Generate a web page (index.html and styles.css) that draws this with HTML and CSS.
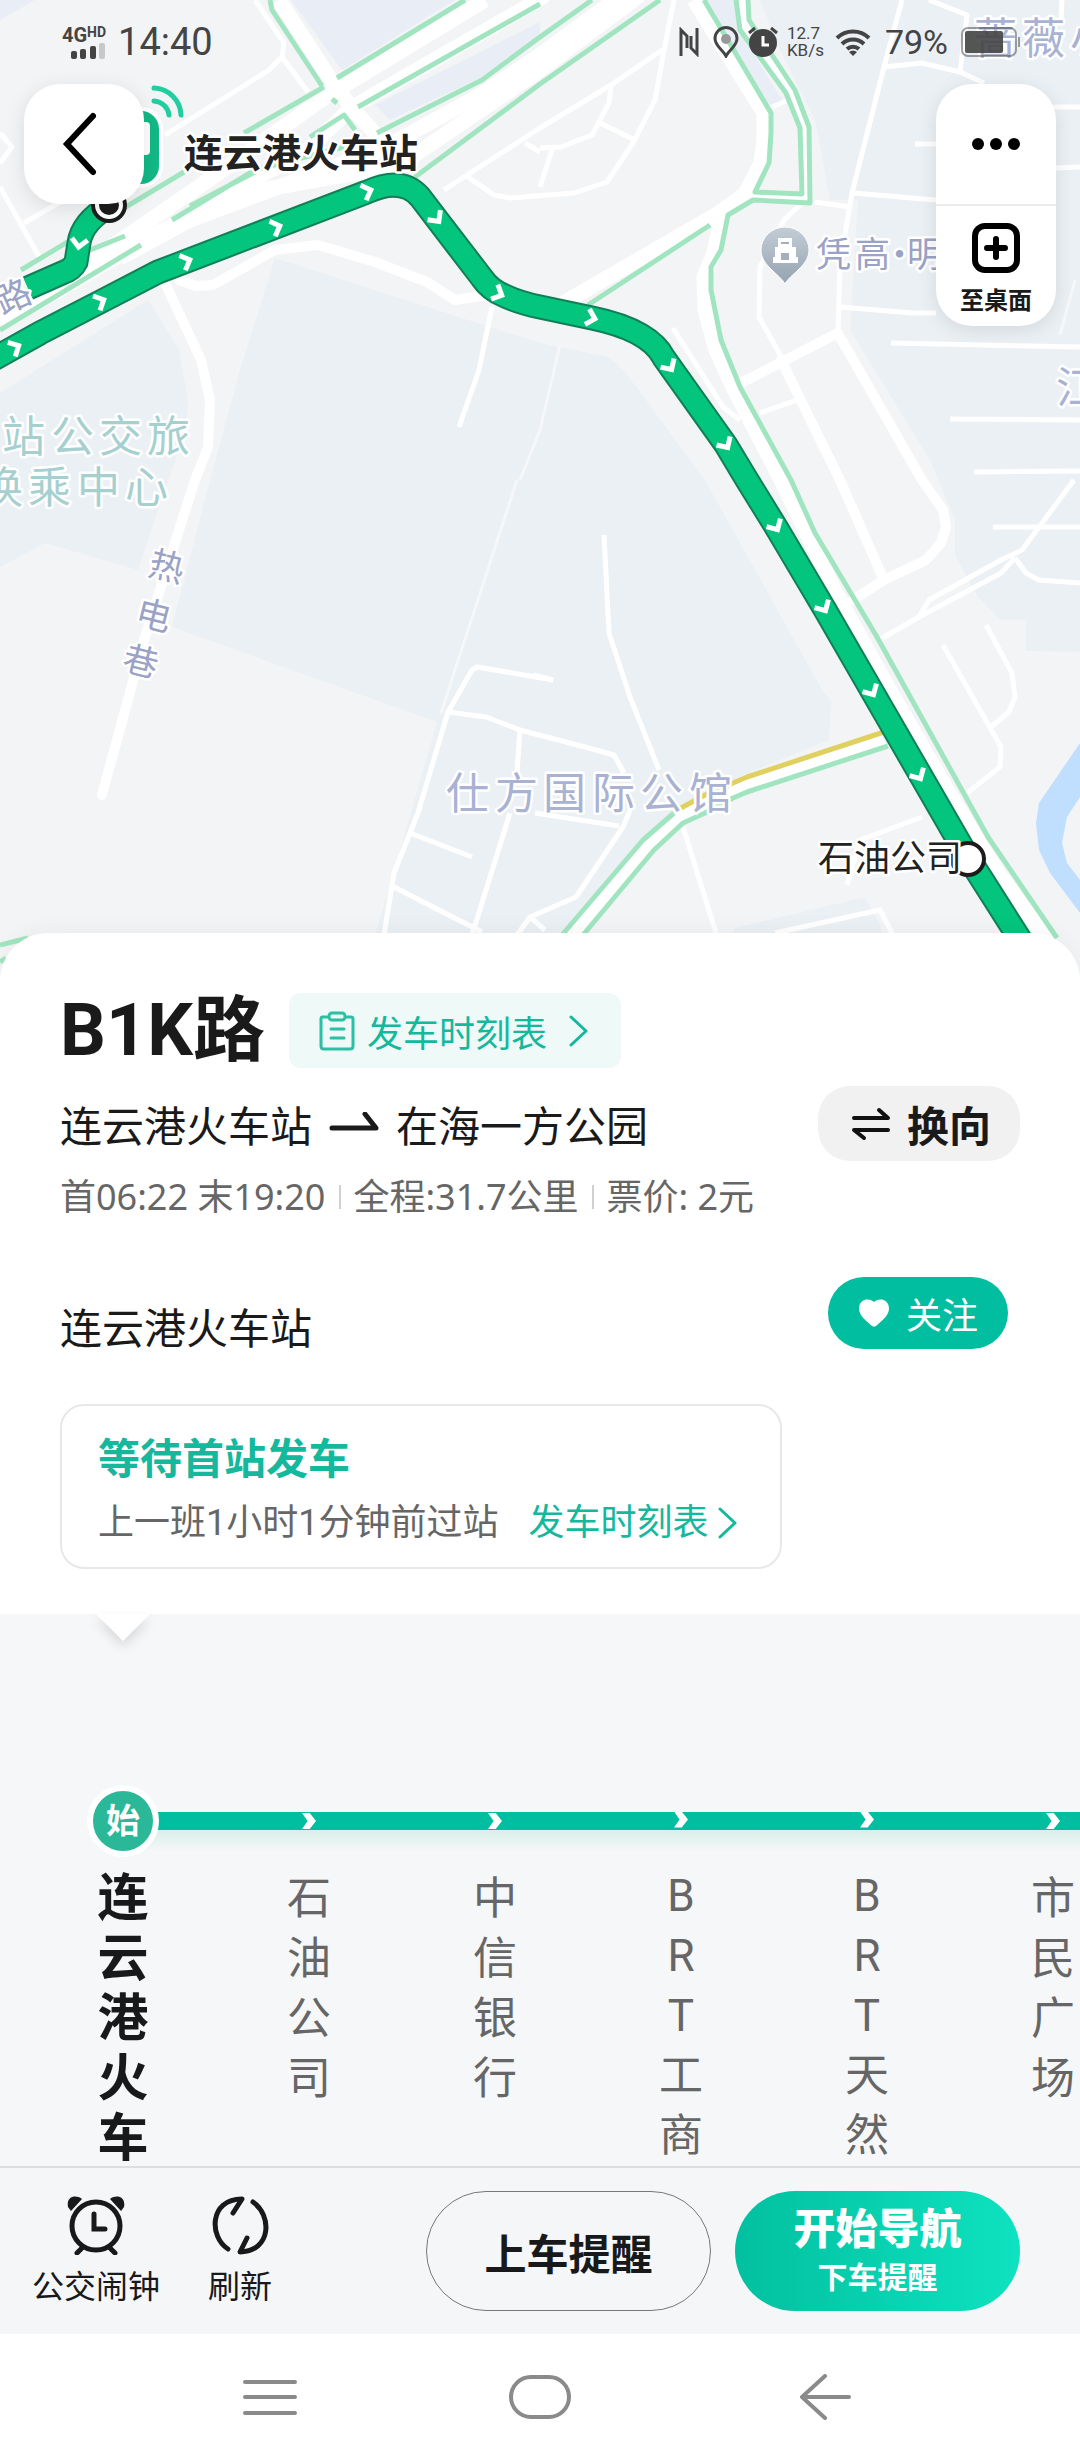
FILE: index.html
```html
<!DOCTYPE html>
<html lang="zh-CN">
<head>
  <meta charset="UTF-8">
  <meta name="viewport" content="width=device-width, initial-scale=1">
  <title>B1K路</title>
  <link rel="stylesheet" href="styles.css">
</head>
<body>
  <div class="page">
    <section class="map">
      <svg class="map-canvas" viewBox="0 0 1080 985" preserveAspectRatio="xMidYMin slice">
        <defs>
          <linearGradient id="poi" x1="0" y1="0" x2="0" y2="1">
            <stop offset="0" stop-color="#c3cdd6"/>
            <stop offset="1" stop-color="#94a3af"/>
          </linearGradient>
          <path id="arrow" d="M-5-8 3 0-5 8"/>
        </defs>

        <!-- 地块 -->
        <g class="block">
          <path d="M275 258 540 343 609 357 626 373 705 480 822 690 831 700 829 740 743 775 680 812 562 933 376 985 376 933 437 722 172 627 210 480 240 370Z"/>
          <path d="M0 393 148 300 179 350 188 400 186 430 158 510 138 570 45 543 0 567Z"/>
          <path d="M760 0H1080V652L1026 651 1026 620 1000 620 978 597 955 555 955 520 930 460 850 330 858 200 830 200 815 120 780 50Z"/>
          <path d="M735 928 865 897 880 925 890 985 720 985Z"/>
        </g>
        <g class="block block-top">
          <path d="M291 0H455L342 70Z"/>
          <path d="M375 105 540 22V36L480 78 390 120Z"/>
          <path d="M0 0H35L0 20Z"/>
          <path d="M700 0H736L745 40 785 105 772 108Z"/>
        </g>

        <path class="river" d="M1080 743 1039 803 1036 823 1039 850 1050 873 1080 913V880L1067 863 1062 843 1067 817 1080 797Z"/>

        <!-- 小路 -->
        <g class="road">
          <path d="M255 0 284 43 282 57 308 92M282 57 269 70 165 135M0 133 12 147 0 163M0 187 41 260M24 223 95 182"/>
          <path d="M492 307 479 370 459 427M540 128 611 85 662 50M540 128 444 190M674 0 664 50 655 100 633 143 607 182 574 193 510 198 494 195 468 177"/>
          <path d="M611 85 609 103 592 135 561 147 540 148M600 123 635 140M552 150 540 187M525 143 540 152"/>
          <path d="M902 0 884 67 852 193 840 263 838 333M884 67 922 63 960 72 984 83M929 0 967 15 960 72M1062 0 1061 20"/>
          <path d="M815 202 850 207M853 193 936 200M915 144H940M840 307 912 313H936M1056 168 1080 167M1053 107H1080"/>
          <path d="M891 343 1080 347M950 419 1080 420M974 472 1080 471M993 527H1080M770 108 786 101"/>
          <path d="M802 203 784 220 760 267 759 317 783 360M760 413 797 400M673 328 723 407 740 420"/>
          <path d="M1074 480 1022 550 1001 560 929 600 919 617 879 640M1015 558 1001 573 919 617M1015 558 1026 573 1039 580 1080 583"/>
          <path d="M986 625 1012 673 1015 697 1009 712 991 727M943 645 1001 747 1000 767 967 793M922 817 860 840 847 885"/>
          <path d="M604 535 609 633 630 697 659 770M683 827 716 933M533 675 553 680"/>
          <path d="M553 680 477 667 472 670 448 712 418 813 394 873 384 935M448 712 486 717 520 730 585 747 614 755 624 773"/>
          <path d="M520 730 517 773M510 813 472 935M410 833 472 857M394 887 482 932M517 935 530 917 576 897 623 827 630 810M530 917 545 930M535 813 619 826"/>
          <path d="M775 933 880 910 893 935"/>
        </g>
        <path class="road faint" d="M517 480 441 713M560 345 540 430 520 480M1075 280 1060 335"/>

        <!-- 主路 -->
        <g class="road mid">
          <path d="M165 283 201 360 210 400 208 447 195 480 145 637 102 795"/>
          <path d="M179 280 196 286 213 285 275 250 318 245 375 262 427 282 455 300 486 295"/>
          <path d="M838 333 743 382M840 337 922 480 943 510 946 527 941 543 926 560 884 580 853 600M781 360 840 480 884 580"/>
        </g>
        <g class="road wide">
          <path d="M279 0 331 80 351 107 390 150"/>
          <path d="M0 318 117 243 200 186 327 96 485 0"/>
          <path d="M0 324 150 238 310 148 351 108 530 5 545-5"/>
          <path d="M120 258 190 220 384 148 482 94 540 55 622-5"/>
          <path d="M250 192 400 165 540 70 640-5"/>
          <path d="M694 0 764 113V140L761 163 745 194 719 213 560 305"/>
          <path d="M722 215 714 253 704 277 705 310 716 350 733 387 781 480 836 593 884 680 953 800 998 873 1057 953 1080 990"/>
          <path d="M571 937 647 847 678 817 743 787 884 740"/>
        </g>
        <path class="road loop" d="M742 0 745 25 790 92 805 128V199L750 196"/>

        <!-- 路况 -->
        <g class="traffic">
          <path d="M270 0 272 10 322 86M337 78 465 0M358 107 540 4M377 133 482 80 540 37 592 0M415 177 540 84 660 0"/>
          <path d="M21 270 184 172M244 133 324 87M310 137 344 115 355 130M172 220 255 170 344 147M190 206 255 172M60 262 125 236M0 330 141 245M332 99 337 103"/>
          <path d="M704 0 771 113 771 133 769 163 755 192 802 194 800 128 786 93 740 30 736 0"/>
          <path d="M748 0 749 20 795 90 809 127 810 203 753 200 728 215 721 250 711 267 711 290 721 340 740 387 791 480 815 533 877 637 988 837 1057 938"/>
          <path d="M588 305 710 225M562 935 643 840 674 813M583 935 654 850 683 823 705 813 733 798 747 792 888 746M0 945 28 938M0 962 6 958"/>
        </g>
        <path class="traffic slow" d="M681 808 705 795 733 783 747 777 884 732"/>

        <!-- 公交线路 -->
        <g class="line line-edge">
          <path d="M-10 361 40 333 100 302 158 272 367 192Q402 176 420 197L436 218 482 278Q490 290 505 296 520 303 540 307L592 318Q650 330 664 358L726 445 747 480 776 527 824 608 969 859 1030 955"/>
          <path d="M109 206Q82 222 79 243L76 262Q72 270 62 273L28 288"/>
        </g>
        <g class="line">
          <path d="M-10 361 40 333 100 302 158 272 367 192Q402 176 420 197L436 218 482 278Q490 290 505 296 520 303 540 307L592 318Q650 330 664 358L726 445 747 480 776 527 824 608 969 859 1030 955"/>
          <path d="M109 206Q82 222 79 243L76 262Q72 270 62 273L28 288"/>
        </g>
        <g class="arrows">
          <use href="#arrow" transform="translate(16 347) rotate(-28)"/>
          <use href="#arrow" transform="translate(101 301) rotate(-26)"/>
          <use href="#arrow" transform="translate(187 261) rotate(-22)"/>
          <use href="#arrow" transform="translate(277 227) rotate(-21)"/>
          <use href="#arrow" transform="translate(368 191) rotate(-21)"/>
          <use href="#arrow" transform="translate(437 219) rotate(53)"/>
          <use href="#arrow" transform="translate(499 294) rotate(25)"/>
          <use href="#arrow" transform="translate(592 318) rotate(16)"/>
          <use href="#arrow" transform="translate(670 367) rotate(57)"/>
          <use href="#arrow" transform="translate(726 445) rotate(58)"/>
          <use href="#arrow" transform="translate(776 527) rotate(60)"/>
          <use href="#arrow" transform="translate(824 608) rotate(60)"/>
          <use href="#arrow" transform="translate(872 692) rotate(60)"/>
          <use href="#arrow" transform="translate(919 776) rotate(60)"/>
          <use href="#arrow" transform="translate(79 244) rotate(98)"/>
        </g>

        <!-- 站点 -->
        <circle cx="109" cy="205" r="16" fill="#fff" stroke="#1c1c1c" stroke-width="4"/>
        <circle cx="109" cy="205" r="10" fill="#1c1c1c"/>
        <circle cx="968" cy="859" r="16" fill="#fff" stroke="#1c1c1c" stroke-width="4"/>

        <rect x="88" y="109" width="73" height="77" rx="20" fill="#12b987" stroke="#fff" stroke-width="4"/>
        <rect x="100" y="122" width="50" height="33" rx="4" fill="#fff"/>
        <path class="signal" d="M154 101A16 16 0 0 1 169 115M154 88A28 28 0 0 1 181 115"/>

        <path d="M785 284C780 274 761 266 761 250A24 23 0 0 1 809 250C809 266 790 274 785 284Z" fill="url(#poi)" stroke="#fff" stroke-width="1"/>
        <path d="M778 238H792V247H796V257H798V263H773V257H775V247H778Z" fill="#fff"/>
        <path d="M781 243H789M782 254H788V259H782Z" fill="#a3b0ba" stroke="#a3b0ba" stroke-width="2"/>

        <g class="label">
          <text class="area" x="974 1022 1070" y="54">蔷薇小</text>
          <text class="area" x="1056" y="403">江</text>
          <text class="area" x="446 495 543 592 640 689" y="809">仕方国际公馆</text>
          <text class="area hub" x="2 51 99 147" y="452">站公交旅</text>
          <text class="area hub" x="-20 28 77 125" y="503">换乘中心</text>
          <text class="street" x="816 855 882 907" y="267">凭高·明</text>
          <text class="street" transform="translate(167 566) rotate(14)" text-anchor="middle" dy="13">热</text>
          <text class="street" transform="translate(154 615) rotate(14)" text-anchor="middle" dy="13">电</text>
          <text class="street" transform="translate(141 661) rotate(14)" text-anchor="middle" dy="13">巷</text>
          <text class="street" transform="translate(13 296) rotate(-24)" text-anchor="middle" dy="13">路</text>
          <text class="stop stop-main" x="184" y="167">连云港火车站</text>
          <text class="stop" x="818" y="871">石油公司</text>
        </g>
      </svg>

      <div class="status">
        <div class="status-left">
          <div class="network">
            <span class="network-type">4G<sup>HD</sup></span>
            <svg width="36" height="16" viewBox="0 0 36 16">
              <rect x="1" y="8" width="6" height="8" rx="2"/>
              <rect x="10" y="6" width="6" height="10" rx="2"/>
              <rect x="20" y="3" width="6" height="13" rx="2"/>
              <rect x="29" y="0" width="6" height="16" rx="2" opacity=".25"/>
            </svg>
          </div>
          <time>14:40</time>
        </div>
        <div class="status-right">
          <svg width="20" height="30" viewBox="0 0 20 30" fill="none" stroke="#444" stroke-width="3">
            <path d="M2 29V3L8 9V21M18 1V27L12 21V9"/>
          </svg>
          <svg class="gap" width="26" height="32" viewBox="0 0 26 32">
            <path d="M13 30C10 24 2 20 2 12.500A11 11 0 0 1 24 12.500C24 20 16 24 13 30Z" fill="none" stroke="#444" stroke-width="3"/>
            <circle cx="13" cy="13" r="5" fill="#999"/>
          </svg>
          <svg width="32" height="32" viewBox="0 0 32 32">
            <circle cx="16" cy="17" r="14"/>
            <path d="M2 7 8 2M30 7 24 2" stroke="#444" stroke-width="3"/>
            <path d="M16 10V19H22" fill="none" stroke="#fff" stroke-width="3"/>
          </svg>
          <span class="speed"><span>12.7</span><span>KB/s</span></span>
          <svg width="36" height="30" viewBox="0 0 36 30" fill="none" stroke="#444" stroke-width="4">
            <path d="M2 11A23 23 0 0 1 34 11M7 17A16 16 0 0 1 29 17M12 22A9 9 0 0 1 24 22"/>
            <path d="M14 25Q18 22 22 25L18 29Z" fill="#444" stroke="none"/>
          </svg>
          <span class="percent">79%</span>
          <svg width="62" height="32" viewBox="0 0 62 32">
            <rect x="2" y="2" width="54" height="28" rx="6" fill="none" stroke="#444" stroke-width="2" opacity=".5"/>
            <rect x="5" y="5" width="38" height="22" rx="2" opacity=".9"/>
            <path d="M59 11V21" stroke="#444" stroke-width="2" opacity=".5"/>
          </svg>
        </div>
      </div>

      <div class="tools">
        <button class="tool back" aria-label="返回">
          <svg width="60" height="72" viewBox="0 0 60 72" fill="none" stroke="#000" stroke-width="6" stroke-linecap="round">
            <path d="M39 8 13 36 39 64"/>
          </svg>
        </button>
        <div class="tool-group">
          <button class="tool" aria-label="更多">
            <svg width="48" height="12" viewBox="0 0 48 12">
              <circle cx="6" cy="6" r="6"/><circle cx="24" cy="6" r="6"/><circle cx="42" cy="6" r="6"/>
            </svg>
          </button>
          <button class="tool desk">
            <svg width="48" height="50" viewBox="0 0 48 50" fill="none" stroke="#000" stroke-width="6" stroke-linecap="round">
              <rect x="3" y="3" width="42" height="44" rx="10"/>
              <path d="M24 16V34M15 25H33"/>
            </svg>
            <span>至桌面</span>
          </button>
        </div>
      </div>
    </section>

    <section class="sheet">
      <div class="title-row">
        <h1>B1K路</h1>
        <a class="timetable" href="#">
          <svg width="36" height="40" viewBox="0 0 36 40" fill="none" stroke="#2bbfa3" stroke-width="3">
            <path d="M8 6H3Q2 6 2 8V35Q2 38 5 38H31Q34 38 34 35V8Q34 6 32 6H28" stroke-linecap="round"/>
            <rect x="10" y="2" width="16" height="7" rx="3"/>
            <path d="M12 18H25M12 27H25" stroke-linecap="round"/>
          </svg>
          <span>发车时刻表</span>
          <svg class="chevron" width="20" height="32" viewBox="0 0 20 32"><path d="M2 2 17 16 2 30"/></svg>
        </a>
      </div>
      <div class="route-row">
        <p class="route">
          <span>连云港火车站</span>
          <svg width="50" height="24" viewBox="0 0 50 24" fill="none" stroke="#1a1a1a" stroke-width="5" stroke-linecap="round" stroke-linejoin="round">
            <path d="M3 16H47L36 2"/>
          </svg>
          <span>在海一方公园</span>
        </p>
        <button class="swap">
          <svg width="38" height="34" viewBox="0 0 38 34" fill="none" stroke="#111" stroke-width="4" stroke-linecap="round" stroke-linejoin="round">
            <path d="M2 11H36L27 3M36 23H2L12 31"/>
          </svg>
          <span>换向</span>
        </button>
      </div>
      <p class="info"><span>首06:22 末19:20</span><span>全程:31.7公里</span><span>票价: 2元</span></p>

      <div class="stop-row">
        <h2>连云港火车站</h2>
        <button class="follow">
          <svg width="32" height="30" viewBox="0 0 32 30">
            <path d="M16 4C20 0 31 0 31 11C31 18 22 24 18 28Q16 29 14 28C10 24 1 18 1 11C1 0 12 0 16 4Z" fill="#fff"/>
          </svg>
          <span>关注</span>
        </button>
      </div>

      <div class="card">
        <h3>等待首站发车</h3>
        <p>
          <span>上一班1小时1分钟前过站</span>
          <a href="#">发车时刻表<svg class="chevron" width="20" height="32" viewBox="0 0 20 32"><path d="M2 2 17 16 2 30"/></svg></a>
        </p>
      </div>
    </section>

    <section class="stations">
      <svg class="pointer" width="74" height="44" viewBox="0 0 74 44">
        <path d="M10 0H64L37 27Z" fill="#fff"/>
      </svg>
      <ol class="station-list">
        <li class="current"><i class="node">始</i><span>连云港火车</span></li>
        <li><i class="node"></i><span>石油公司</span></li>
        <li><i class="node"></i><span>中信银行</span></li>
        <li><i class="node"></i><span>BRT工商</span></li>
        <li><i class="node"></i><span>BRT天然</span></li>
        <li><i class="node"></i><span>市民广场</span></li>
      </ol>
    </section>

    <footer class="actions">
      <button class="icon-btn">
        <svg width="58" height="60" viewBox="0 0 58 60" fill="none" stroke="#18191b" stroke-width="5" stroke-linecap="round">
          <circle cx="29" cy="31" r="24"/>
          <path d="M27 19V34H38M16 52 10 58M42 52 48 58"/>
          <path d="M1 12C-1 2 8-1 15 4L4 16ZM57 12C59 2 50-1 43 4L54 16Z" fill="#18191b" stroke="none"/>
        </svg>
        <span>公交闹钟</span>
      </button>
      <button class="icon-btn">
        <svg width="58" height="60" viewBox="0 0 58 60" fill="none" stroke="#18191b" stroke-width="5" stroke-linecap="round" stroke-linejoin="round">
          <path d="M17 54C-2 42-2 4 31 4L22 18M42 7C61 20 61 56 29 57L36 43"/>
        </svg>
        <span>刷新</span>
      </button>
      <button class="remind">上车提醒</button>
      <button class="navigate"><strong>开始导航</strong><small>下车提醒</small></button>
    </footer>

    <nav class="system-nav">
      <button aria-label="最近任务">
        <svg width="54" height="44" viewBox="0 0 54 44"><path d="M2 7H52M2 22H52M2 38H52"/></svg>
      </button>
      <button aria-label="主屏幕">
        <svg width="62" height="44" viewBox="0 0 62 44"><rect x="2" y="2" width="58" height="40" rx="20"/></svg>
      </button>
      <button aria-label="返回">
        <svg width="82" height="46" viewBox="0 0 82 46"><path d="M56 2 33 23 56 44M33 23H80"/></svg>
      </button>
    </nav>
  </div>
</body>
</html>
```

FILE: styles.css
```css
*{
  box-sizing: border-box;
}
body,h1,h2,h3,p,ol{
  margin: 0;
  padding: 0;
}
body{
  background: #fff;
  color: #1a1a1a;
  font-family: Roboto, "Noto Sans CJK SC", sans-serif;
  font-size: 36px;
}
button{
  padding: 0;
  border: 0;
  background: none;
  color: inherit;
  font: inherit;
}
a{
  color: #14b89c;
  text-decoration: none;
}
svg{
  display: block;
  flex: none;
}
.page{
  display: flex;
  flex-direction: column;
  min-height: 100vh;
  overflow: hidden;
}

/* 地图 */
.map{
  position: relative;
}
.map-canvas{
  width: 100%;
  height: 985px;
  background: #f3f4f6;
}
.block{
  fill: #ebf0f4;
}
.block-top{
  fill: #e9edf6;
}
.river{
  fill: #c0dfff;
}
.road{
  fill: none;
  stroke: #fff;
  stroke-width: 5;
  stroke-linejoin: round;
}
.road.faint{
  stroke: #f5f7f9;
  stroke-width: 3;
}
.road.mid{
  stroke-width: 10;
  stroke-linecap: round;
}
.road.wide{
  stroke-width: 15;
}
.road.loop{
  stroke-width: 8;
}
.traffic{
  fill: none;
  stroke: #a0e5c0;
  stroke-width: 5;
  stroke-linejoin: round;
}
.traffic.slow{
  stroke: #e0d060;
}
.line{
  fill: none;
  stroke: #04c57d;
  stroke-width: 21;
}
.line-edge{
  stroke: #107f58;
  stroke-width: 25;
}
.arrows{
  fill: none;
  stroke: #fff;
  stroke-width: 5;
}
.signal{
  fill: none;
  stroke: #22cda0;
  stroke-width: 5;
  stroke-linecap: round;
}
.label{
  font-family: "Noto Sans CJK SC", sans-serif;
  stroke: #fff;
  stroke-width: 5;
  stroke-linejoin: round;
  paint-order: stroke;
}
.area{
  font-size: 43px;
  fill: #a9b2d3;
}
.hub{
  fill: #a6d0d0;
}
.street{
  font-size: 35px;
  fill: #9aa2c6;
}
.stop{
  font-size: 36px;
  fill: #222;
}
.stop-main{
  font-size: 39px;
  font-weight: 700;
}

/* 状态栏 */
.status{
  position: absolute;
  top: 20px;
  left: 0;
  right: 0;
  display: flex;
  justify-content: space-between;
  height: 44px;
  padding: 0 58px 0 62px;
  color: #444;
  fill: #444;
}
.status-left,
.status-right{
  display: flex;
  align-items: center;
}
.status-left{
  gap: 12px;
  font-size: 38px;
}
.network{
  display: flex;
  flex-direction: column;
  align-items: flex-end;
}
.network-type{
  display: flex;
  height: 18px;
  font-size: 20px;
  font-weight: 700;
  line-height: 20px;
}
.network-type sup{
  font-size: 14px;
  line-height: 14px;
}
.status-right{
  gap: 8px;
}
.status-right .gap{
  margin-left: 6px;
}
.speed{
  display: flex;
  flex-direction: column;
  width: 40px;
  font-size: 17px;
  line-height: 17px;
}
.percent{
  margin: 0 4px 0 6px;
  font-size: 34px;
}

/* 悬浮按钮 */
.tools{
  position: absolute;
  top: 84px;
  left: 24px;
  right: 24px;
  display: flex;
  justify-content: space-between;
  align-items: flex-start;
}
.tool{
  display: flex;
  flex-direction: column;
  align-items: center;
  justify-content: center;
  width: 120px;
  height: 120px;
}
.back,
.tool-group{
  border-radius: 36px;
  background: #fff;
  box-shadow: 0 4px 20px rgba(0, 0, 0, .1);
}
.desk{
  gap: 14px;
  height: 122px;
  padding-top: 6px;
  border-top: 2px solid #ededed;
  font-size: 24px;
  font-weight: 700;
  line-height: 28px;
}

/* 线路信息 */
.sheet{
  position: relative;
  margin-top: -52px;
  padding: 60px 60px 45px;
  border-radius: 48px 48px 0 0;
  background: #fff;
  box-shadow: 0 -4px 20px rgba(0, 0, 0, .04);
}
.title-row,
.route-row,
.route,
.timetable,
.info,
.card p,
.card a{
  display: flex;
  align-items: center;
}
.title-row{
  gap: 24px;
  height: 75px;
}
h1{
  font-size: 72px;
  line-height: 78px;
}
.timetable{
  gap: 12px;
  height: 75px;
  padding: 0 32px 0 30px;
  border-radius: 12px;
  background: #eff9f8;
}
.timetable .chevron{
  margin-left: 10px;
}
.chevron{
  fill: none;
  stroke: #14b89c;
  stroke-width: 3;
  stroke-linecap: round;
  stroke-linejoin: round;
}
.route-row{
  justify-content: space-between;
  margin-top: 18px;
}
.route{
  gap: 17px;
  font-size: 42px;
}
.swap{
  display: flex;
  align-items: center;
  gap: 17px;
  height: 75px;
  padding: 0 29px 0 34px;
  border-radius: 32px;
  background: #f1f1f1;
  font-size: 42px;
  font-weight: 700;
}
.info{
  margin-top: 12px;
  color: #666;
  font-family: "Noto Sans", "Noto Sans CJK SC", sans-serif;
  line-height: 48px;
}
.info span + span{
  display: flex;
  align-items: center;
}
.info span + span::before{
  content: "";
  width: 2px;
  height: 24px;
  margin: 0 12px 0 14px;
  background: #d0d0d0;
}
.stop-row{
  display: flex;
  align-items: flex-start;
  justify-content: space-between;
  margin-top: 56px;
}
h2{
  padding-top: 29px;
  font-size: 42px;
  font-weight: 400;
  line-height: 48px;
}
.follow{
  display: flex;
  align-items: center;
  justify-content: center;
  gap: 16px;
  width: 180px;
  height: 72px;
  margin-right: 12px;
  border-radius: 36px;
  background: #00be9f;
  color: #fff;
}
.card{
  width: fit-content;
  margin-top: 50px;
  padding: 28px 42px 20px 36px;
  border: 2px solid #e8e8e8;
  border-radius: 24px;
}
h3{
  color: #14b89c;
  font-size: 42px;
  line-height: 52px;
}
.card p{
  gap: 30px;
  margin-top: 13px;
  color: #666;
  line-height: 48px;
}
.card a{
  gap: 10px;
}

/* 站点列表 */
.stations{
  position: relative;
  flex: 1;
  padding-top: 171px;
  background: #f6f7f9;
}
.pointer{
  position: absolute;
  top: 0;
  left: 86px;
  filter: drop-shadow(0 6px 6px rgba(0, 0, 0, .12));
}
.station-list{
  display: flex;
  height: 381px;
  padding-left: 30px;
  overflow: hidden;
  list-style: none;
}
.station-list li{
  display: flex;
  flex: none;
  flex-direction: column;
  align-items: center;
  width: 186px;
  background: linear-gradient(#00be9f, #00be9f) 0 27px / 100% 18px no-repeat,
    linear-gradient(#d9efea, #f6f7f9) 0 45px / 100% 22px no-repeat;
  color: #666;
  font-size: 44px;
  line-height: 60px;
}
.station-list .current{
  background-position: 93px 27px, 93px 45px;
  color: #18191b;
  font-size: 51px;
  font-weight: 700;
}
.station-list span{
  width: 1em;
  margin-top: 12px;
  text-align: center;
  word-break: break-all;
}
.node{
  display: flex;
  align-items: center;
  justify-content: center;
  width: 14px;
  height: 72px;
  font-style: normal;
}
.node:empty::before{
  content: "";
  width: 14px;
  height: 16px;
  background: #fff;
  clip-path: polygon(0 0, 55% 0, 100% 50%, 55% 100%, 0 100%, 40% 50%);
}
.current .node{
  width: 72px;
  border: 6px solid #fff;
  border-radius: 50%;
  background: #2ab898;
  color: #fff;
  font-size: 34px;
}

/* 底部操作 */
.actions{
  display: flex;
  align-items: center;
  height: 168px;
  padding: 0 60px 0 32px;
  border-top: 2px solid #dcdee0;
  background: #f5f6f8;
}
.icon-btn{
  display: flex;
  flex-direction: column;
  align-items: center;
  gap: 12px;
  margin-right: 48px;
  color: #18191b;
  font-size: 32px;
  line-height: 40px;
}
.remind,
.navigate{
  width: 285px;
  height: 120px;
  border-radius: 60px;
  font-size: 42px;
  font-weight: 700;
}
.remind{
  margin: 0 24px 0 auto;
  border: 1px solid #77777a;
  color: #18191b;
}
.navigate{
  display: flex;
  flex-direction: column;
  align-items: center;
  justify-content: center;
  background: linear-gradient(90deg, #02c09f, #0ee2c0);
  color: #fff;
}
.navigate strong{
  line-height: 54px;
}
.navigate small{
  font-size: 30px;
  line-height: 42px;
}

/* 系统导航 */
.system-nav{
  display: flex;
  justify-content: center;
  height: 126px;
  background: #fff;
}
.system-nav button{
  display: flex;
  align-items: center;
  justify-content: center;
  width: 25%;
}
.system-nav svg{
  fill: none;
  stroke: #8a8a8a;
  stroke-width: 4;
  stroke-linecap: round;
  stroke-linejoin: round;
}
```
